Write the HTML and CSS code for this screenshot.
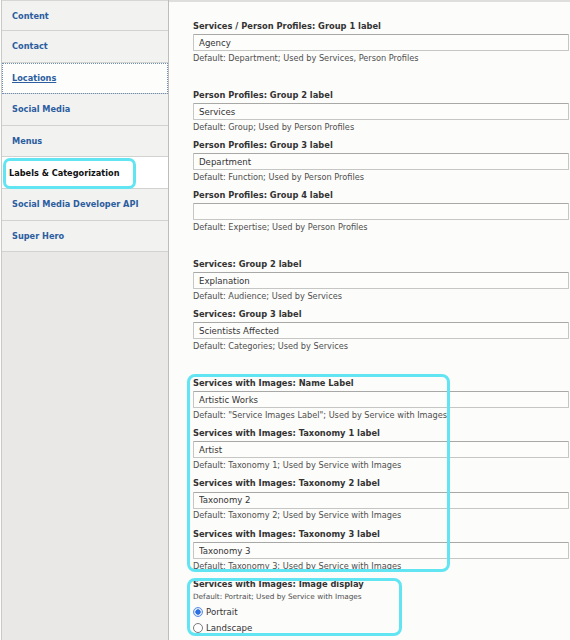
FILE: index.html
```html
<!DOCTYPE html>
<html>
<head>
<meta charset="utf-8">
<link rel="stylesheet" href="styles.css">
</head>
<body>
<div class="page">
  <nav class="sidebar">
    <a class="tab">Content</a>
    <a class="tab">Contact</a>
    <a class="tab focused">Locations</a>
    <a class="tab">Social Media</a>
    <a class="tab">Menus</a>
    <a class="tab active">Labels &amp; Categorization</a>
    <a class="tab">Social Media Developer API</a>
    <a class="tab">Super Hero</a>
  </nav>
  <main class="main">
    <section class="group">
      <div class="field">
        <label class="label">Services / Person Profiles: Group 1 label</label>
        <input class="input" type="text" value="Agency">
        <div class="desc">Default: Department; Used by Services, Person Profiles</div>
      </div>
    </section>
    <section class="group">
      <div class="field">
        <label class="label">Person Profiles: Group 2 label</label>
        <input class="input" type="text" value="Services">
        <div class="desc">Default: Group; Used by Person Profiles</div>
      </div>
      <div class="field">
        <label class="label">Person Profiles: Group 3 label</label>
        <input class="input" type="text" value="Department">
        <div class="desc">Default: Function; Used by Person Profiles</div>
      </div>
      <div class="field">
        <label class="label">Person Profiles: Group 4 label</label>
        <input class="input" type="text" value="">
        <div class="desc">Default: Expertise; Used by Person Profiles</div>
      </div>
    </section>
    <section class="group">
      <div class="field">
        <label class="label">Services: Group 2 label</label>
        <input class="input" type="text" value="Explanation">
        <div class="desc">Default: Audience; Used by Services</div>
      </div>
      <div class="field">
        <label class="label">Services: Group 3 label</label>
        <input class="input" type="text" value="Scientists Affected">
        <div class="desc">Default: Categories; Used by Services</div>
      </div>
    </section>
    <section class="group">
      <div class="highlight-wrap hl-names">
        <div class="field">
          <label class="label">Services with Images: Name Label</label>
          <input class="input" type="text" value="Artistic Works">
          <div class="desc">Default: "Service Images Label"; Used by Service with Images</div>
        </div>
        <div class="field">
          <label class="label">Services with Images: Taxonomy 1 label</label>
          <input class="input" type="text" value="Artist">
          <div class="desc">Default: Taxonomy 1; Used by Service with Images</div>
        </div>
        <div class="field">
          <label class="label">Services with Images: Taxonomy 2 label</label>
          <input class="input" type="text" value="Taxonomy 2">
          <div class="desc">Default: Taxonomy 2; Used by Service with Images</div>
        </div>
        <div class="field">
          <label class="label">Services with Images: Taxonomy 3 label</label>
          <input class="input" type="text" value="Taxonomy 3">
          <div class="desc">Default: Taxonomy 3; Used by Service with Images</div>
        </div>
      </div>
      <div class="highlight-wrap hl-display">
        <div class="field radios">
          <div class="label">Services with Images: Image display</div>
          <div class="desc small">Default: Portrait; Used by Service with Images</div>
          <label class="radio"><input type="radio" name="disp" checked><span>Portrait</span></label>
          <label class="radio"><input type="radio" name="disp"><span>Landscape</span></label>
        </div>
      </div>
    </section>
  </main>
</div>
</body>
</html>
```

FILE: styles.css
```css
html, body {
  margin: 0;
  padding: 0;
}
body {
  background: #fcfcfa;
  font-family: "DejaVu Sans", Verdana, sans-serif;
  color: #333;
}
.page {
  display: flex;
  height: 640px;
  overflow: hidden;
}
.sidebar {
  width: 166px;
  margin-left: 1px;
  border-left: 1px solid #c9c9c7;
  border-right: 1px solid #bdbdbb;
  background: #e9e8e6;
  display: flex;
  flex-direction: column;
  flex: none;
}
.tab {
  position: relative;
  display: flex;
  align-items: center;
  height: 30.6px;
  padding-left: 10px;
  background: #f2f2f0;
  border-bottom: 1px solid #d2d2d0;
  color: #2b5d9f;
  font-weight: bold;
  font-size: 8.2px;
  text-decoration: none;
}
.tab:first-child {
  border-top: 1px solid #d6d6d4;
  height: 29px;
}
.tab.focused {
  background: #fdfdfc;
  text-decoration: underline;
  outline: 1px dotted #6f8db5;
  outline-offset: -1px;
}
.tab.active {
  background: #ffffff;
  color: #111;
  padding-left: 7px;
}
.tab.active::after {
  content: "";
  position: absolute;
  left: 1px;
  top: 1px;
  width: 127px;
  height: 25px;
  border: 3px solid #62e5f3;
  border-radius: 7px;
}
.main {
  flex: 1;
  border-top: 2px solid #dededc;
  padding: 18.5px 1px 0 24px;
  display: flex;
  flex-direction: column;
  gap: 26px;
}
.group {
  display: flex;
  flex-direction: column;
  gap: 7px;
}
.highlight-wrap {
  position: relative;
  display: flex;
  flex-direction: column;
  gap: 7.4px;
}
.highlight-wrap::after {
  content: "";
  position: absolute;
  border: 3px solid #62e5f3;
  border-radius: 8px;
  pointer-events: none;
}
.hl-names::after {
  left: -6px;
  top: -3.5px;
  width: 257px;
  height: 192px;
}
.hl-display::after {
  left: -6px;
  top: -0.5px;
  width: 209px;
  height: 52px;
}
.field {
  display: flex;
  flex-direction: column;
}
.label {
  display: block;
  font-weight: bold;
  font-size: 8.3px;
  line-height: 11px;
  color: #333;
  margin-bottom: 2.5px;
}
.input {
  box-sizing: border-box;
  height: 17px;
  width: 100%;
  margin: 0;
  padding: 0 0 0 5px;
  border: 1px solid #c6c6c4;
  border-top-color: #a8a8a6;
  border-radius: 1px;
  background: #fdfdfc;
  font-family: "DejaVu Sans", Verdana, sans-serif;
  font-size: 8.6px;
  color: #333;
  outline: none;
}
.desc {
  font-size: 8.2px;
  line-height: 11px;
  margin-top: 1.5px;
  color: #4f4f4f;
}
.radios .label {
  margin-bottom: 0;
}
.desc.small {
  margin-top: 0;
  font-size: 7.3px;
  line-height: 13px;
  margin-bottom: 1px;
}
.radio {
  display: flex;
  align-items: center;
  gap: 3px;
  height: 16px;
  font-size: 8.6px;
  color: #333;
}
.radio input {
  appearance: none;
  -webkit-appearance: none;
  box-sizing: border-box;
  width: 10px;
  height: 10px;
  margin: 0;
  border-radius: 50%;
  border: 1px solid #7b7b7b;
  background: #fff;
}
.radio input:checked {
  border-color: #5d8fe4;
  background: radial-gradient(circle, #2b6fe2 0 2.4px, #d6e4fb 2.9px 100%);
}
```
